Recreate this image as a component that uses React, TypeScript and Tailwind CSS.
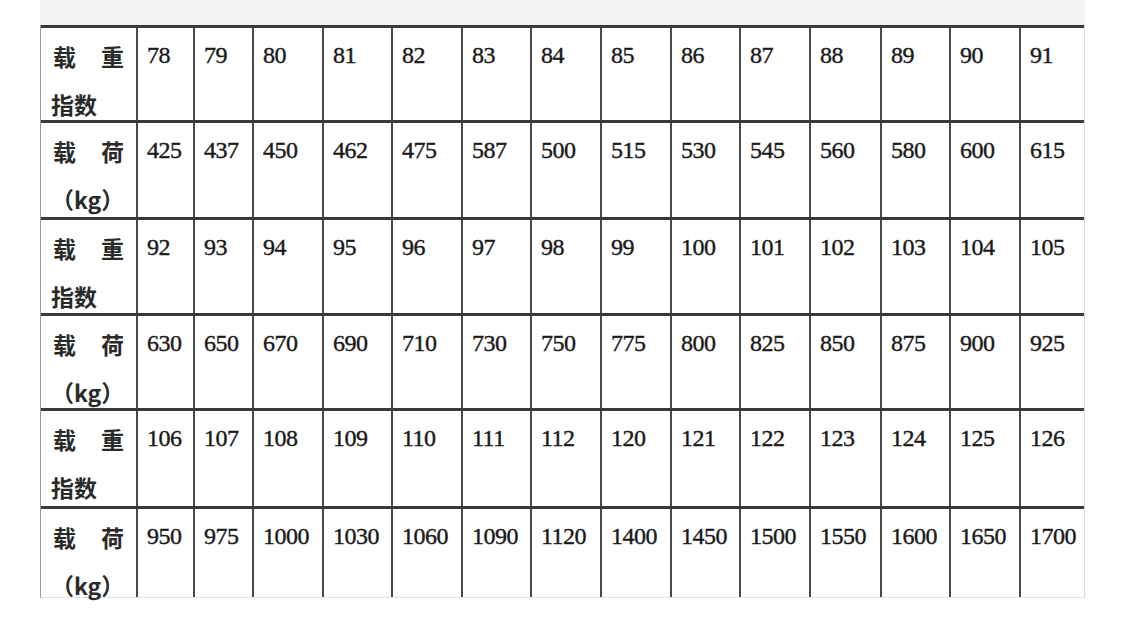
import React from "react";

const colWidths = [
  "w-[95px]", "w-[57px]", "w-[59px]", "w-[70px]", "w-[69px]", "w-[70px]", "w-[69px]",
  "w-[70px]", "w-[70px]", "w-[69px]", "w-[70px]", "w-[71px]", "w-[69px]", "w-[70px]", "w-[66px]",
];

const rowHeights = ["h-[95px]", "h-[97px]", "h-[96px]", "h-[95px]", "h-[98px]", "h-[92px]"];

const rows: { label: [string, string, string]; values: string[] }[] = [
  { label: ["载", "重", "指数"], values: ["78", "79", "80", "81", "82", "83", "84", "85", "86", "87", "88", "89", "90", "91"] },
  { label: ["载", "荷", "（kg）"], values: ["425", "437", "450", "462", "475", "587", "500", "515", "530", "545", "560", "580", "600", "615"] },
  { label: ["载", "重", "指数"], values: ["92", "93", "94", "95", "96", "97", "98", "99", "100", "101", "102", "103", "104", "105"] },
  { label: ["载", "荷", "（kg）"], values: ["630", "650", "670", "690", "710", "730", "750", "775", "800", "825", "850", "875", "900", "925"] },
  { label: ["载", "重", "指数"], values: ["106", "107", "108", "109", "110", "111", "112", "120", "121", "122", "123", "124", "125", "126"] },
  { label: ["载", "荷", "（kg）"], values: ["950", "975", "1000", "1030", "1060", "1090", "1120", "1400", "1450", "1500", "1550", "1600", "1650", "1700"] },
];

const cjk = "font-['Noto_Sans_CJK_SC',sans-serif]";
const serif = "font-['Liberation_Serif','Noto_Sans_CJK_SC',serif]";

export default function App() {
  return (
    <div className="w-[1126px] h-[624px] bg-white overflow-hidden">
      <div className="ml-[40px] w-[1045px]">
        {/* grey strip above the table */}
        <div className="h-[25px] bg-[#f3f3f3]" />

        <div className="border-l border-r border-l-[#9a9a9a] border-r-[#dcdcdc] bg-white">
          {rows.map((row, r) => (
            <div
              key={r}
              className={`flex ${rowHeights[r]} border-t-[3px] border-[#3a3a3a] ${r === rows.length - 1 ? "border-b border-b-[#e2e2e2]" : ""}`}
            >
              {/* label cell */}
              <div className={`${colWidths[0]} shrink-0 pl-[12px] pt-[4px] text-[#2a2a2a] text-[23px] leading-[48px] font-semibold ${cjk}`}>
                <div className="flex w-[71px] justify-between">
                  <span>{row.label[0]}</span>
                  <span>{row.label[1]}</span>
                </div>
                <div className="-ml-[2px]">{row.label[2]}</div>
              </div>

              {row.values.map((v, i) => (
                <div
                  key={i}
                  className={`${colWidths[i + 1]} shrink-0 border-l-2 border-[#4a4a4a] pl-[9px] pt-[3px] text-[24px] leading-[48px] text-[#1a1a1a] whitespace-nowrap tracking-[-0.5px] [-webkit-text-stroke:0.4px_#1a1a1a] ${serif}`}
                >
                  {v}
                </div>
              ))}
            </div>
          ))}
        </div>
      </div>
    </div>
  );
}
